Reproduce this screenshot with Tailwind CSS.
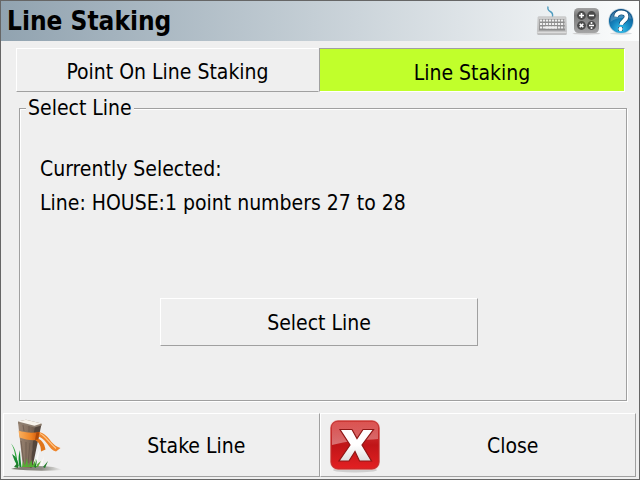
<!DOCTYPE html>
<html lang="en">
<head>
    <meta charset="UTF-8">
    <meta name="viewport" content="width=device-width, initial-scale=1.0">
    <title>Line Staking</title>
    <script src="https://cdn.jsdelivr.net/npm/@tailwindcss/browser@4"></script>
</head>
<body class="font-['Tahoma','DejaVu_Sans_Condensed','Noto_Sans',sans-serif] text-[21px] leading-7 text-black bg-[#efefef]">
    <div class="min-h-screen flex flex-col border border-[#666]">
        <header class="h-10 shrink-0 flex items-center justify-between pl-1.5 pr-1 bg-linear-to-r from-[#91a3b0] to-[#fcfdfd]">
            <h1 class="text-[26px] leading-8 font-bold">Line Staking</h1>
            <div class="flex items-center gap-1">
                <button type="button" aria-label="Keyboard" class="w-8 h-8">
                    <svg viewBox="0 0 32 32" class="w-8 h-8">
                        <defs>
                            <linearGradient id="kb" x1="0" y1="0" x2="0" y2="1">
                                <stop offset="0" stop-color="#d0d0d0"/>
                                <stop offset="1" stop-color="#bdbdbd"/>
                            </linearGradient>
                        </defs>
                        <path d="M13 1.500c-.5 2.500 0 4 2.200 5s2.800 2.500 2.300 5.500" fill="none" stroke="#4f9cbf" stroke-width="1.400"/>
                        <path d="M3 12.500q0-.8.800-.8h26.400q.8 0 .8.800l.7 16h-29.400z" fill="url(#kb)" stroke="#bcbcbc" stroke-width=".6"/>
                        <path d="M4.500 14h25l.5 11.500h-26z" fill="#8d8d8d"/>
                        <path d="M5 15.500h24.500M5 19h24.500M5 22.500h24.500" stroke="#f0f0f0" stroke-width="2.200" stroke-dasharray="2.200 .8"/>
                        <path d="M10 22.500h12" stroke="#f0f0f0" stroke-width="2.200"/>
                        <path d="M2.500 27.500h29" stroke="#dcdcdc" stroke-width="1.500"/>
                        <path d="M2.500 29.200h29" stroke="#a8a8a8"/>
                    </svg>
                </button>
                <button type="button" aria-label="Calculator" class="w-8 h-8">
                    <svg viewBox="0 0 32 32" class="w-8 h-8">
                        <defs>
                            <linearGradient id="calc" x1="0" y1="0" x2="0" y2="1">
                                <stop offset="0" stop-color="#a2a2a2"/>
                                <stop offset=".3" stop-color="#7a7a7a"/>
                                <stop offset="1" stop-color="#a6a6a6"/>
                            </linearGradient>
                        </defs>
                        <ellipse cx="15.500" cy="28.500" rx="14" ry="1.200" fill="#cfcfcf"/>
                        <rect x="3" y="3" width="25" height="25" rx="4.500" fill="url(#calc)"/>
                        <g fill="#4b4b4b">
                            <circle cx="10.500" cy="10.500" r="4.400"/>
                            <circle cx="20.500" cy="10.500" r="4.400"/>
                            <circle cx="10.500" cy="20.500" r="4.400"/>
                            <circle cx="20.500" cy="20.500" r="4.400"/>
                        </g>
                        <path d="M8 10.500h5M10.500 8v5M18 10.500h5M8.700 18.700l3.600 3.600M12.300 18.700l-3.600 3.600M18 20.500h5" stroke="#fff" stroke-width="1.600"/>
                        <circle cx="20.500" cy="18" r="1" fill="#fff"/>
                        <circle cx="20.500" cy="23" r="1" fill="#fff"/>
                    </svg>
                </button>
                <button type="button" aria-label="Help" class="w-7 h-8">
                    <svg viewBox="0 0 28 32" class="w-7 h-8">
                        <defs>
                            <radialGradient id="help" cx=".5" cy=".85" r=".8">
                                <stop offset="0" stop-color="#35c3ee"/>
                                <stop offset=".5" stop-color="#1583bd"/>
                                <stop offset="1" stop-color="#0d4f86"/>
                            </radialGradient>
                        </defs>
                        <ellipse cx="14" cy="28.500" rx="11" ry="1.200" fill="#d5dadd"/>
                        <circle cx="14" cy="16" r="12.800" fill="#c3d3dc"/>
                        <circle cx="14" cy="16" r="12" fill="url(#help)"/>
                        <path d="M3.500 14C4 8 8.500 5.200 14 5.200S24 8 24.500 14c-6-2-15-2-21 3z" fill="#fff" opacity=".2"/>
                        <g fill="none" stroke="#0b4570" stroke-width="5">
                            <path d="M9 11.800c.4-3 2.800-4.300 5.500-4.300 3.200 0 5 1.700 5 4.300 0 3.800-5 4-5.300 8"/>
                            <path d="M13.500 22v4"/>
                        </g>
                        <path d="M9 11.800c.4-3 2.800-4.300 5.500-4.300 3.200 0 5 1.700 5 4.300 0 3.800-5 4-5.300 8" fill="none" stroke="#fff" stroke-width="3.800"/>
                        <circle cx="13.500" cy="24" r="2.200" fill="#fff"/>
                    </svg>
                </button>
            </div>
        </header>

        <main class="flex-1 flex flex-col pt-[7px] pb-3">
            <nav class="grid grid-cols-[303fr_306fr] ml-[15px] mr-3.5">
                <button type="button" class="h-11 pt-1 border border-t-white border-l-white border-r-transparent border-b-[#a0a0a0]">Point On Line Staking</button>
                <button type="button" class="h-11 pt-1.5 border border-t-[#a0a0a0] border-l-[#a0a0a0] border-r-white border-b-white bg-[#c1ff2b]">Line Staking</button>
            </nav>

            <fieldset class="flex-1 mt-0.5 ml-[18px] mr-3 pl-5 pr-7 border border-[#a0a0a0] shadow-[1px_1px_0_#fff,inset_1px_1px_0_#fff]">
                <legend class="-ml-3.5 px-0.5 bg-[#efefef]">Select Line</legend>
                <div class="pt-[30px] leading-[34px]">
                    <p>Currently Selected:</p>
                    <p>Line: HOUSE:1 point numbers 27 to 28</p>
                </div>
                <button type="button" class="block mt-[78px] mx-auto w-[318px] h-12 pt-0.5 border border-t-white border-l-white border-r-[#a0a0a0] border-b-[#a0a0a0]">Select Line</button>
            </fieldset>
        </main>

        <footer class="grid grid-cols-2 pl-0.5 pr-[3px] pb-0.5">
            <button type="button" class="h-16 flex items-center pl-1 border border-t-white border-l-white border-r-[#a0a0a0] border-b-[#a0a0a0]">
                <svg viewBox="0 0 60 60" class="w-[60px] h-[60px] shrink-0" aria-hidden="true">
                    <defs>
                        <linearGradient id="wood" x1="0" y1="0" x2="1" y2="0">
                            <stop offset="0" stop-color="#9a8574"/>
                            <stop offset=".6" stop-color="#85705f"/>
                            <stop offset="1" stop-color="#6c5a4c"/>
                        </linearGradient>
                        <linearGradient id="ribbon" x1="0" y1="0" x2="1" y2="0">
                            <stop offset="0" stop-color="#f9b060"/>
                            <stop offset=".6" stop-color="#ef8424"/>
                            <stop offset="1" stop-color="#c9520a"/>
                        </linearGradient>
                        <linearGradient id="ground" x1="0" y1="0" x2="1" y2="0">
                            <stop offset="0" stop-color="#777568"/>
                            <stop offset=".6" stop-color="#8e8d86"/>
                            <stop offset="1" stop-color="#efefef"/>
                        </linearGradient>
                    </defs>
                    <path d="M3 54c10-3 26-4 42-2 4 1 8 2 9 3-16 1-32 1-51-1z" fill="url(#ground)"/>
                    <path d="M10 7l17 4-4 42h-8z" fill="url(#wood)"/>
                    <path d="M26.500 11l7-2-9 43-2 1z" fill="#54463c"/>
                    <path d="M10 6.500l8-1.800 15.500 3.800v2l-7 2L10 8.500z" fill="#8d7d6e"/>
                    <path d="M10 6.500l8-1.800 15.500 3.800-7 2.300z" fill="#f8f4ec"/>
                    <path d="M13 26l3 24M18 27v22M22 28l-2 20M15 10l1 6M21 11v6" stroke="#67564a" stroke-width=".7" fill="none"/>
                    <path d="M10.500 15.500c6 2 12 3 21 1.500l-2 8c-7 .5-13-.5-18-2.500z" fill="url(#ribbon)"/>
                    <path d="M31 17c5 1 9 5 12 9.500 3 3.500 6 5.500 9.500 6.500L48 36.500c-4-1-6-4-9-8-3-4-6-6.500-9-7z" fill="#ee852b"/>
                    <path d="M32 18.500c5 2 8 8 16 15" stroke="#ffc88a" stroke-width="1.200" fill="none"/>
                    <path d="M28 23c5 1 8.500 5 9.500 11.500L33 36.500c0-5-1.500-9-5.500-11z" fill="#e0761c"/>
                    <path d="M28.500 17l3 .5-1.500 7-3 .5z" fill="#b04a08"/>
                    <path d="M3 28.500c5 5 6.500 14 6.500 24.500C7 43 7.500 35 3 28.500z" fill="#32a83e"/>
                    <path d="M4 39c5 3 6 7 7 13-4-4-5-8-7-13zM11.500 52c-1-6-1.500-10 .5-17 0 6 .8 11 1.500 17z" fill="#168b2f"/>
                    <path d="M14 52l1-6 2 5 2-8 1 8 4-6v6l5-9-2 9 6-5-3 6z" fill="#53ad32"/>
                    <path d="M27 51c0-7 2-12 5-17-1 6-3 11-3 17M32 51l4-10-2 10" fill="#fbfbf7"/>
                    <path d="M6 52l4-5v6M26 52l3-8-1 9M35 52l5-6-3 7" fill="#217c2a"/>
                </svg>
                <span class="flex-1 pt-0.5 pl-1.5">Stake Line</span>
            </button>
            <button type="button" class="h-16 flex items-center pl-1 border border-t-white border-l-white border-r-[#a0a0a0] border-b-[#a0a0a0]">
                <svg viewBox="0 0 60 60" class="w-[60px] h-[60px] shrink-0" aria-hidden="true">
                    <defs>
                        <linearGradient id="red" x1="0" y1="0" x2="0" y2="1">
                            <stop offset="0" stop-color="#d94340"/>
                            <stop offset=".5" stop-color="#c01518"/>
                            <stop offset="1" stop-color="#e32022"/>
                        </linearGradient>
                        <linearGradient id="gloss" x1="0" y1="0" x2="0" y2="1">
                            <stop offset="0" stop-color="#fff" stop-opacity=".1"/>
                            <stop offset="1" stop-color="#fff" stop-opacity=".4"/>
                        </linearGradient>
                        <linearGradient id="cross" x1="0" y1="0" x2="0" y2="1">
                            <stop offset=".5" stop-color="#fff"/>
                            <stop offset="1" stop-color="#dedede"/>
                        </linearGradient>
                    </defs>
                    <ellipse cx="30" cy="55" rx="22" ry="2.500" fill="#cecece"/>
                    <rect x="5" y="5" width="50" height="50" rx="8" fill="#f3b5b1"/>
                    <rect x="6" y="6" width="48" height="48" rx="7" fill="url(#red)" stroke="#bd2e2d" stroke-width="1"/>
                    <path d="M7 13c0-4 2-6 6-6h34c4 0 6 2 6 6v11c-14 1-32 2-46 6z" fill="url(#gloss)"/>
                    <path d="M15 14.500h12l5 9 6-9h10.500L37 30l9.500 16H34.500L30 36.500 24 46H14l11-16z" fill="url(#cross)" stroke="#8f1716" stroke-width="1.200"/>
                </svg>
                <span class="flex-1 pt-0.5 pl-1.5">Close</span>
            </button>
        </footer>
    </div>
</body>
</html>
